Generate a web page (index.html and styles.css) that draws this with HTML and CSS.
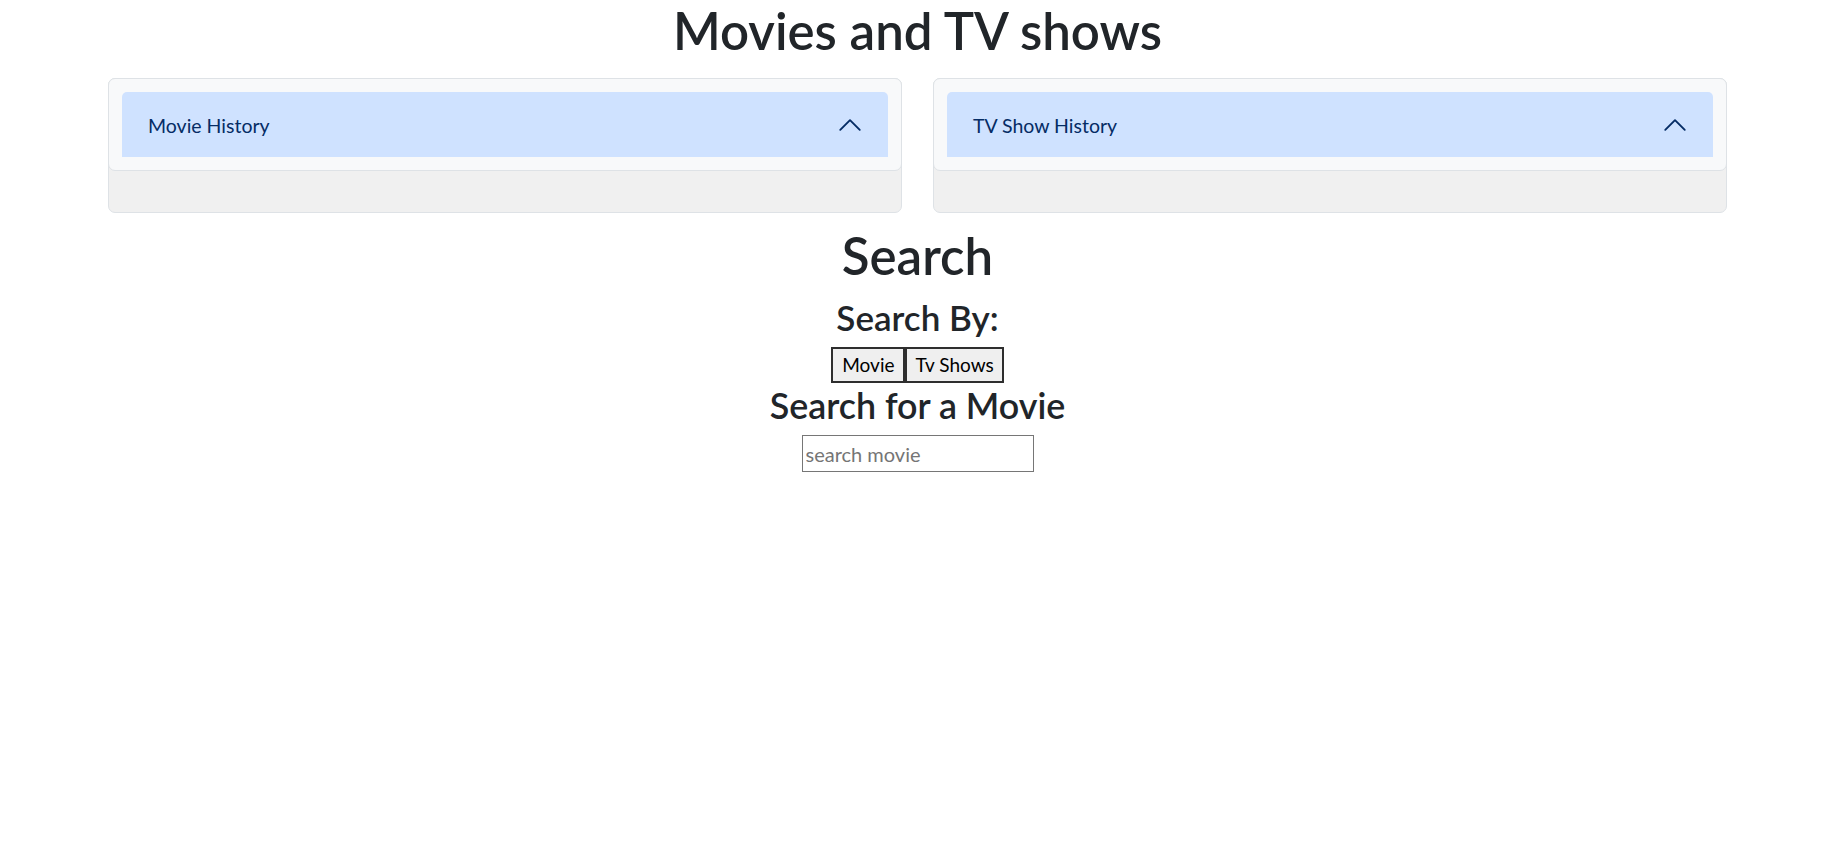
FILE: index.html
```html
<!DOCTYPE html>
<html lang="en">
<head>
<meta charset="utf-8">
<title>Movies and TV shows</title>
<link rel="stylesheet" href="styles.css">
</head>
<body>
<main class="page">
  <h1 class="title">Movies and TV shows</h1>
  <div class="panels">
    <section class="panel">
      <div class="panel-head">
        <button class="acc-btn" type="button">
          <span class="acc-label">Movie History</span>
          <svg class="chev" viewBox="0 0 16 16" width="26" height="26" fill="none" stroke="#052c65" stroke-width="1.15" stroke-linecap="round" stroke-linejoin="round"><path d="M2 11L8 5L14 11"/></svg>
        </button>
      </div>
      <div class="panel-body"></div>
    </section>
    <section class="panel">
      <div class="panel-head">
        <button class="acc-btn" type="button">
          <span class="acc-label">TV Show History</span>
          <svg class="chev" viewBox="0 0 16 16" width="26" height="26" fill="none" stroke="#052c65" stroke-width="1.15" stroke-linecap="round" stroke-linejoin="round"><path d="M2 11L8 5L14 11"/></svg>
        </button>
      </div>
      <div class="panel-body"></div>
    </section>
  </div>
  <h1 class="search-title">Search</h1>
  <h3 class="by">Search By:</h3>
  <div class="modes"><button class="mode" type="button">Movie</button><button class="mode" type="button">Tv Shows</button></div>
  <h3 class="for">Search for a Movie</h3>
  <input class="query" type="text" placeholder="search movie">
</main>
</body>
</html>
```
FILE: styles.css
```css
html, body {
  margin: 0;
  background: #ffffff;
}
body {
  font-family: Lato, "Open Sans", sans-serif;
  font-size: 20px;
  color: #212529;
}
.page {
  padding-left: 7px;
  text-align: center;
}
.title,
.search-title {
  margin: 0;
  font-size: 51px;
  line-height: 52px;
  font-weight: 600;
  color: #212529;
}
.title {
  line-height: 62px;
}
.panels {
  margin: 16px 101px 0 101px;
  display: grid;
  grid-template-columns: 1fr 1fr;
  column-gap: 31px;
  text-align: left;
}
.panel {
  border: 1px solid #dee2e6;
  border-radius: 7px;
  background: #f0f0f0;
}
.panel-head {
  margin: -1px -1px 0 -1px;
  border: 1px solid #dee2e6;
  border-radius: 7px;
  background: #f8f9fa;
  padding: 13px;
}
.acc-btn {
  display: flex;
  align-items: center;
  justify-content: space-between;
  width: 100%;
  height: 65px;
  margin: 0;
  padding: 1px 25px 0 26px;
  border: 0;
  border-radius: 5px 5px 0 0;
  background: #cfe2ff;
  color: #052c65;
  font-family: Lato, "Open Sans", sans-serif;
  font-size: 19.5px;
  text-align: left;
  cursor: pointer;
}
.chev {
  display: block;
  flex: none;
}
.panel-body {
  height: 41px;
}
.search-title {
  margin-top: 17px;
}
.by,
.for {
  margin: 0;
  font-size: 35px;
  line-height: 42px;
  font-weight: 600;
  color: #212529;
}
.by {
  margin-top: 14px;
}
.for {
  margin-top: 2px;
  font-size: 35.8px;
}
.modes {
  margin-top: 9px;
  display: flex;
  justify-content: center;
}
.mode {
  height: 36px;
  margin: 0;
  padding: 0 8px 0 9px;
  border: 2px solid #2e2e2e;
  background: #efefef;
  color: #000000;
  font-family: Lato, "Open Sans", sans-serif;
  font-size: 19px;
  line-height: 30px;
}
.query {
  display: block;
  box-sizing: border-box;
  width: 232px;
  height: 37px;
  margin: 8px auto 0 auto;
  padding: 1px 3px;
  border: 1px solid #767676;
  border-radius: 0;
  background: #ffffff;
  font-family: Lato, "Open Sans", sans-serif;
  font-size: 20px;
  color: #000000;
  outline: none;
}
.query::placeholder {
  color: #757575;
}
```
